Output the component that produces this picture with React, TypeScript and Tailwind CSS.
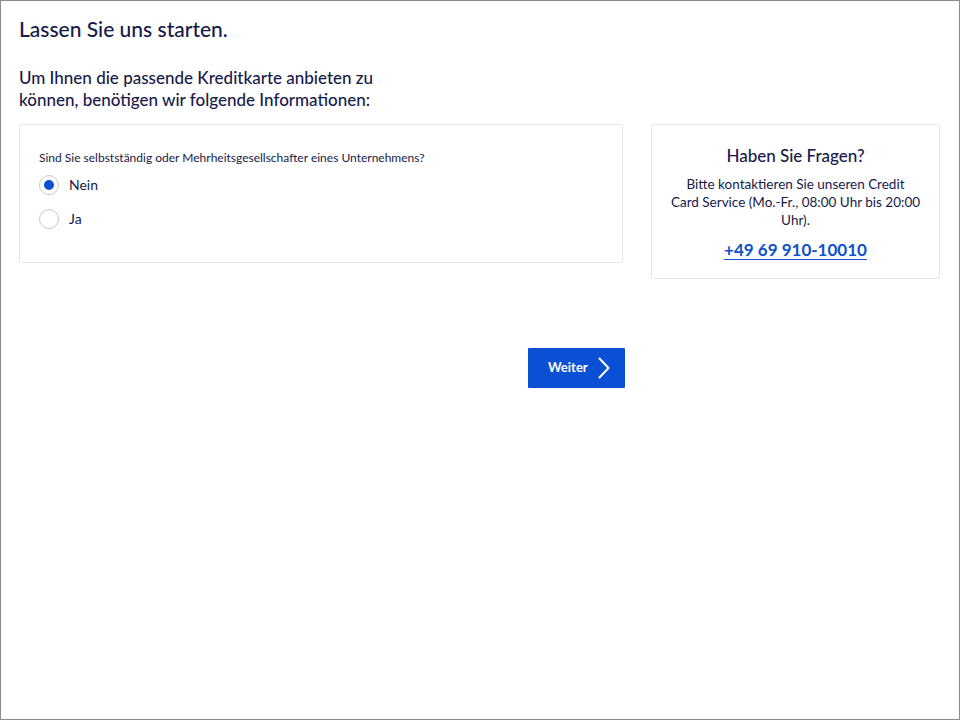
import React, { useState } from 'react';

export default function App() {
  const [choice, setChoice] = useState<'nein' | 'ja'>('nein');

  return (
    <div className="min-h-[720px] w-[960px] border border-[#8a8a8a] bg-white text-[#161a4a] [font-family:Lato,'Noto_Sans',sans-serif]">
      <div className="px-[18px] pt-[14px]">
        <h1 className="text-[21px] font-medium leading-[28px]">Lassen Sie uns starten.</h1>
        <h2 className="mt-[24px] w-[380px] text-[17px] font-medium leading-[22px]">
          Um Ihnen die passende Kreditkarte anbieten zu können, benötigen wir folgende Informationen:
        </h2>

        <div className="mt-[13px] flex items-start gap-[28px]">
          {/* Left: question */}
          <div className="flex w-[604px] flex-col">
            <div className="h-[139px] rounded-[2px] border border-[#e6e6e6] px-[19px] pt-[25px]">
              <p className="text-[12px] leading-[16px]">
                Sind Sie selbstständig oder Mehrheitsgesellschafter eines Unternehmens?
              </p>
              <div className="mt-[9px] flex flex-col gap-[14px]">
                {[
                  { id: 'nein', label: 'Nein' },
                  { id: 'ja', label: 'Ja' },
                ].map((o) => (
                  <label
                    key={o.id}
                    className="flex cursor-pointer items-center gap-[10px]"
                    onClick={() => setChoice(o.id as 'nein' | 'ja')}
                  >
                    <span className="flex h-[20px] w-[20px] items-center justify-center rounded-full border border-[#c8c8c8] bg-white">
                      {choice === o.id && <span className="h-[10px] w-[10px] rounded-full bg-[#0b4fd4]" />}
                    </span>
                    <span className="text-[14px] leading-[20px]">{o.label}</span>
                  </label>
                ))}
              </div>
            </div>

            <div className="mr-[-2px] mt-[85px] flex justify-end">
              <button className="flex h-[40px] w-[97px] items-center gap-[10px] rounded-[1px] bg-[#0b4fd4] pl-[20px] text-[13px] font-bold text-white">
                Weiter
                <svg width="12" height="22" viewBox="0 0 12 22" fill="none">
                  <path d="M1.5 1.5 L10.5 11 L1.5 20.5" stroke="white" strokeWidth="2" strokeLinecap="round" strokeLinejoin="round" />
                </svg>
              </button>
            </div>
          </div>

          {/* Right: help */}
          <div className="flex h-[155px] w-[289px] flex-col items-center rounded-[2px] border border-[#e6e6e6] px-[12px] pt-[20px] text-center">
            <h3 className="text-[17px] font-medium leading-[22px]">Haben Sie Fragen?</h3>
            <p className="mt-[8px] max-w-[256px] text-[13.5px] leading-[18px]">
              Bitte kontaktieren Sie unseren Credit
              <br />
              Card Service (Mo.-Fr., 08:00 Uhr bis 20:00 Uhr).
            </p>
            <a href="#" className="mt-[9px] text-[17px] font-bold leading-[24px] text-[#0f52cc] underline underline-offset-[3px]">
              +49 69 910-10010
            </a>
          </div>
        </div>
      </div>
    </div>
  );
}
